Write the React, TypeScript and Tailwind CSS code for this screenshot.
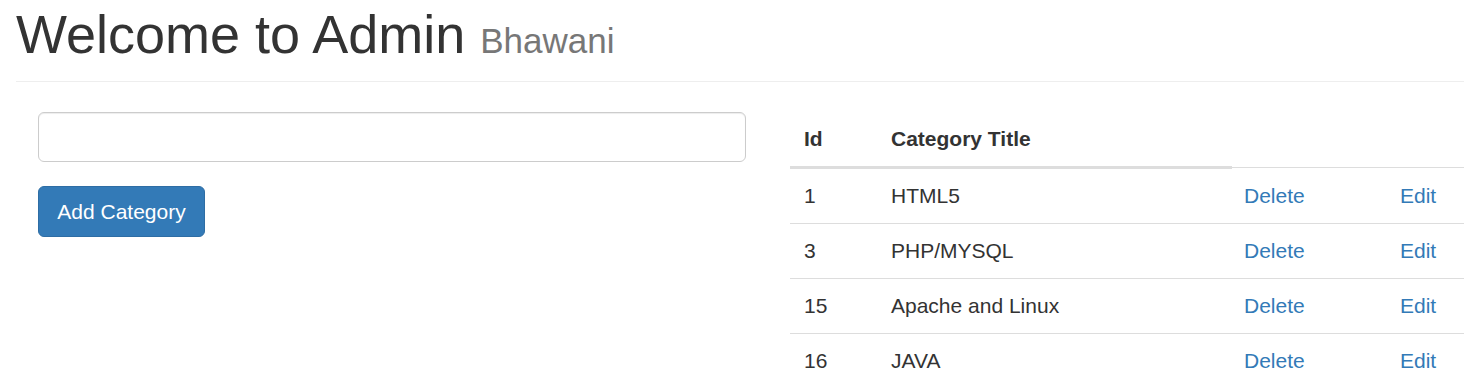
const categories = [
  { id: 1, title: 'HTML5' },
  { id: 3, title: 'PHP/MYSQL' },
  { id: 15, title: 'Apache and Linux' },
  { id: 16, title: 'JAVA' },
]

export default function App() {
  return (
    <div className="w-full overflow-hidden bg-white text-[#333] font-['Liberation_Sans',Arial,sans-serif]">
      <div className="w-[1536px] px-[16px]">
        <div className="pt-[7px] pb-[19px] border-b border-[#eee]">
          <h1 className="text-[54px] leading-[55px] font-normal">
            Welcome to Admin <small className="text-[35px] leading-none text-[#777]">Bhawani</small>
          </h1>
        </div>

        <div className="flex mt-[30px]">
          <div className="w-[752px] px-[22px]">
            <input
              type="text"
              className="block w-full h-[50px] border border-[#ccc] rounded-[6px] px-[17px] text-[21px] shadow-[inset_0_1px_1px_rgba(0,0,0,0.075)] focus:outline-none"
            />
            <button
              type="button"
              className="mt-[24px] w-[167px] h-[51px] bg-[#337ab7] border border-[#2e6da4] rounded-[6px] text-white text-[21px] leading-[28px]"
            >
              Add Category
            </button>
          </div>

          <div className="w-[752px] px-[22px]">
            <table className="w-full border-collapse text-[21px] leading-[28px]">
              <thead>
                <tr>
                  <th className="w-[89px] text-left font-bold px-[14px] pt-[13px] pb-[13px] border-b-[3px] border-[#ddd]">Id</th>
                  <th className="w-[353px] text-left font-bold px-[12px] pt-[13px] pb-[13px] border-b-[3px] border-[#ddd]">Category Title</th>
                </tr>
              </thead>
              <tbody>
                {categories.map(c => (
                  <tr key={c.id}>
                    <td className="px-[14px] py-[13px] border-t border-[#ddd]">{c.id}</td>
                    <td className="px-[12px] py-[13px] border-t border-[#ddd]">{c.title}</td>
                    <td className="w-[156px] px-[12px] py-[13px] border-t border-[#ddd]">
                      <a href="#" className="text-[#337ab7]">Delete</a>
                    </td>
                    <td className="px-[12px] py-[13px] border-t border-[#ddd]">
                      <a href="#" className="text-[#337ab7]">Edit</a>
                    </td>
                  </tr>
                ))}
              </tbody>
            </table>
          </div>
        </div>
      </div>
    </div>
  )
}
